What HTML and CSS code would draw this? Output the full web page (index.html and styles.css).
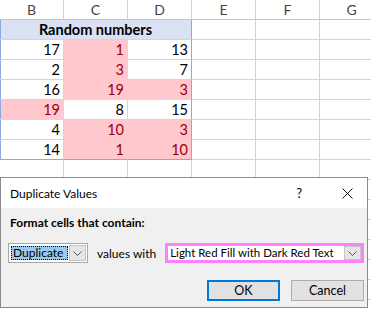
FILE: index.html
```html
<!DOCTYPE html>
<html lang="en">
<head>
    <meta charset="UTF-8">
    <title>Duplicate Values</title>
    <link rel="stylesheet" href="styles.css">
</head>
<body>
    <div class="sheet">
        <div class="col-head">B</div>
        <div class="col-head">C</div>
        <div class="col-head">D</div>
        <div class="col-head">E</div>
        <div class="col-head">F</div>
        <div class="col-head">G</div>

        <div class="cell title tb-left tb-right">Random numbers</div>
        <div class="cell"></div><div class="cell"></div><div class="cell"></div>

        <div class="cell num tb-left">17</div>
        <div class="cell num dup">1</div>
        <div class="cell num tb-right">13</div>
        <div class="cell"></div><div class="cell"></div><div class="cell"></div>

        <div class="cell num tb-left">2</div>
        <div class="cell num dup">3</div>
        <div class="cell num tb-right">7</div>
        <div class="cell"></div><div class="cell"></div><div class="cell"></div>

        <div class="cell num tb-left">16</div>
        <div class="cell num dup">19</div>
        <div class="cell num dup tb-right">3</div>
        <div class="cell"></div><div class="cell"></div><div class="cell"></div>

        <div class="cell num dup tb-left">19</div>
        <div class="cell num">8</div>
        <div class="cell num tb-right">15</div>
        <div class="cell"></div><div class="cell"></div><div class="cell"></div>

        <div class="cell num tb-left">4</div>
        <div class="cell num dup">10</div>
        <div class="cell num dup tb-right">3</div>
        <div class="cell"></div><div class="cell"></div><div class="cell"></div>

        <div class="cell num tb-left tb-bottom">14</div>
        <div class="cell num dup tb-bottom">1</div>
        <div class="cell num dup tb-right tb-bottom">10</div>
        <div class="cell"></div><div class="cell"></div><div class="cell"></div>

        <div class="cell"></div><div class="cell"></div><div class="cell"></div><div class="cell"></div><div class="cell"></div><div class="cell"></div>
        <div class="cell"></div><div class="cell"></div><div class="cell"></div><div class="cell"></div><div class="cell"></div><div class="cell"></div>
        <div class="cell"></div><div class="cell"></div><div class="cell"></div><div class="cell"></div><div class="cell"></div><div class="cell"></div>
        <div class="cell"></div><div class="cell"></div><div class="cell"></div><div class="cell"></div><div class="cell"></div><div class="cell"></div>
        <div class="cell"></div><div class="cell"></div><div class="cell"></div><div class="cell"></div><div class="cell"></div><div class="cell"></div>
        <div class="cell"></div><div class="cell"></div><div class="cell"></div><div class="cell"></div><div class="cell"></div><div class="cell"></div>
        <div class="cell"></div><div class="cell"></div><div class="cell"></div><div class="cell"></div><div class="cell"></div><div class="cell"></div>
    </div>

    <div class="dialog">
        <div class="title-bar">
            <span class="title-text">Duplicate Values</span>
            <span class="help">?</span>
            <span class="close">
                <svg width="11" height="11" viewBox="0 0 11 11">
                    <path d="M0.5 0.5 L10.5 10.5 M10.5 0.5 L0.5 10.5" stroke="#111" stroke-width="1" fill="none"/>
                </svg>
            </span>
        </div>
        <div class="dialog-body">
            <div class="label">Format cells that contain:</div>
            <div class="rule-row">
                <div class="combo combo-type">
                    <span class="combo-value selected">Duplicate</span>
                    <span class="drop-btn">
                        <svg width="9" height="5" viewBox="0 0 9 5"><path d="M0.5 0.5 L4.5 4.5 L8.5 0.5" stroke="#555" fill="none"/></svg>
                    </span>
                </div>
                <span class="values-with">values with</span>
                <div class="combo combo-format">
                    <span class="combo-value">Light Red Fill with Dark Red Text</span>
                    <span class="drop-btn">
                        <svg width="9" height="5" viewBox="0 0 9 5"><path d="M0.5 0.5 L4.5 4.5 L8.5 0.5" stroke="#555" fill="none"/></svg>
                    </span>
                </div>
            </div>
            <div class="buttons">
                <button class="btn btn-default">OK</button>
                <button class="btn">Cancel</button>
            </div>
        </div>
    </div>
</body>
</html>
```

FILE: styles.css
```css
body {
    margin: 0;
    width: 371px;
    height: 311px;
    overflow: hidden;
    position: relative;
    background: #fff;
    font-family: Lato, "Liberation Sans", sans-serif;
}
.sheet {
    display: grid;
    grid-template-columns: repeat(6, 64px);
    grid-auto-rows: 20px;
    width: 384px;
}
.col-head {
    box-sizing: border-box;
    border-right: 1px solid #d4d4d4;
    border-bottom: 1px solid #c6c6c6;
    text-align: center;
    font-size: 14px;
    line-height: 19px;
    color: #444;
}
.cell {
    box-sizing: border-box;
    border-right: 1px solid #d4d4d4;
    border-bottom: 1px solid #d4d4d4;
    font-size: 14.5px;
    line-height: 19px;
    color: #000;
}
.title {
    grid-column: span 3;
    background: #d9e1f2;
    font-weight: bold;
    text-align: center;
}
.num {
    text-align: right;
    padding-right: 3px;
}
.dup {
    background: #ffc7ce;
    color: #9c0006;
    border-color: #ffc7ce;
}
.tb-left {
    box-shadow: inset 1px 0 0 #8ea9db;
}
.tb-right {
    border-right-color: #8ea9db;
}
.tb-bottom {
    border-bottom-color: #8ea9db;
}

/* dialog */
.dialog {
    position: absolute;
    left: 0;
    top: 177px;
    width: 368px;
    height: 131px;
    box-sizing: border-box;
    border: 1px solid #8a8a8a;
    background: #f0f0f0;
    font-family: Lato, "Liberation Sans", sans-serif;
    font-size: 12px;
    color: #000;
    display: flex;
    flex-direction: column;
}
.title-bar {
    height: 30px;
    background: #fff;
    display: flex;
    align-items: center;
    padding-left: 9px;
}
.title-text {
    flex: 1;
    font-size: 12px;
}
.help {
    font-size: 12.5px;
    margin-right: 40px;
}
.close {
    display: flex;
    margin-right: 14px;
}
.dialog-body {
    padding: 6px 3px 0 7px;
}
.label {
    font-weight: bold;
    line-height: 17px;
    padding-left: 2px;
}
.rule-row {
    display: flex;
    align-items: center;
    margin-top: 12px;
    height: 20px;
}
.combo {
    box-sizing: border-box;
    flex-shrink: 0;
    height: 20px;
    background: #fff;
    display: flex;
    align-items: center;
}
.combo-type {
    width: 80px;
    border: 1px solid #a9a9a9;
    padding: 1px;
}
.combo-value {
    flex: 1;
    line-height: 14px;
    white-space: nowrap;
    overflow: hidden;
}
.selected {
    background: #99c9ef;
    outline: 1px dotted #000;
    outline-offset: -1px;
    margin: 0 1px 0 1px;
    padding-left: 2px;
    height: 14px;
}
.drop-btn {
    box-sizing: border-box;
    flex-shrink: 0;
    width: 17px;
    height: 16px;
    background: #e5e5e5;
    border: 1px solid #c4c4c4;
    display: flex;
    align-items: center;
    justify-content: center;
}
.values-with {
    margin: 0 9px;
    white-space: nowrap;
    flex-shrink: 0;
}
.combo-format {
    width: 199px;
    border: 3px solid #ff80ff;
    padding: 0 0 0 2px;
}
.combo-format .combo-value {
    font-size: 11.5px;
}
.combo-format .drop-btn {
    height: 14px;
}
.buttons {
    display: flex;
    justify-content: flex-end;
    gap: 11px;
    margin-top: 17px;
}
.btn {
    box-sizing: border-box;
    width: 73px;
    height: 21px;
    background: #e1e1e1;
    border: 1px solid #adadad;
    font-family: inherit;
    font-size: 12.5px;
    padding: 0;
    color: #000;
}
.btn-default {
    border: 2px solid #0078d7;
}
```
